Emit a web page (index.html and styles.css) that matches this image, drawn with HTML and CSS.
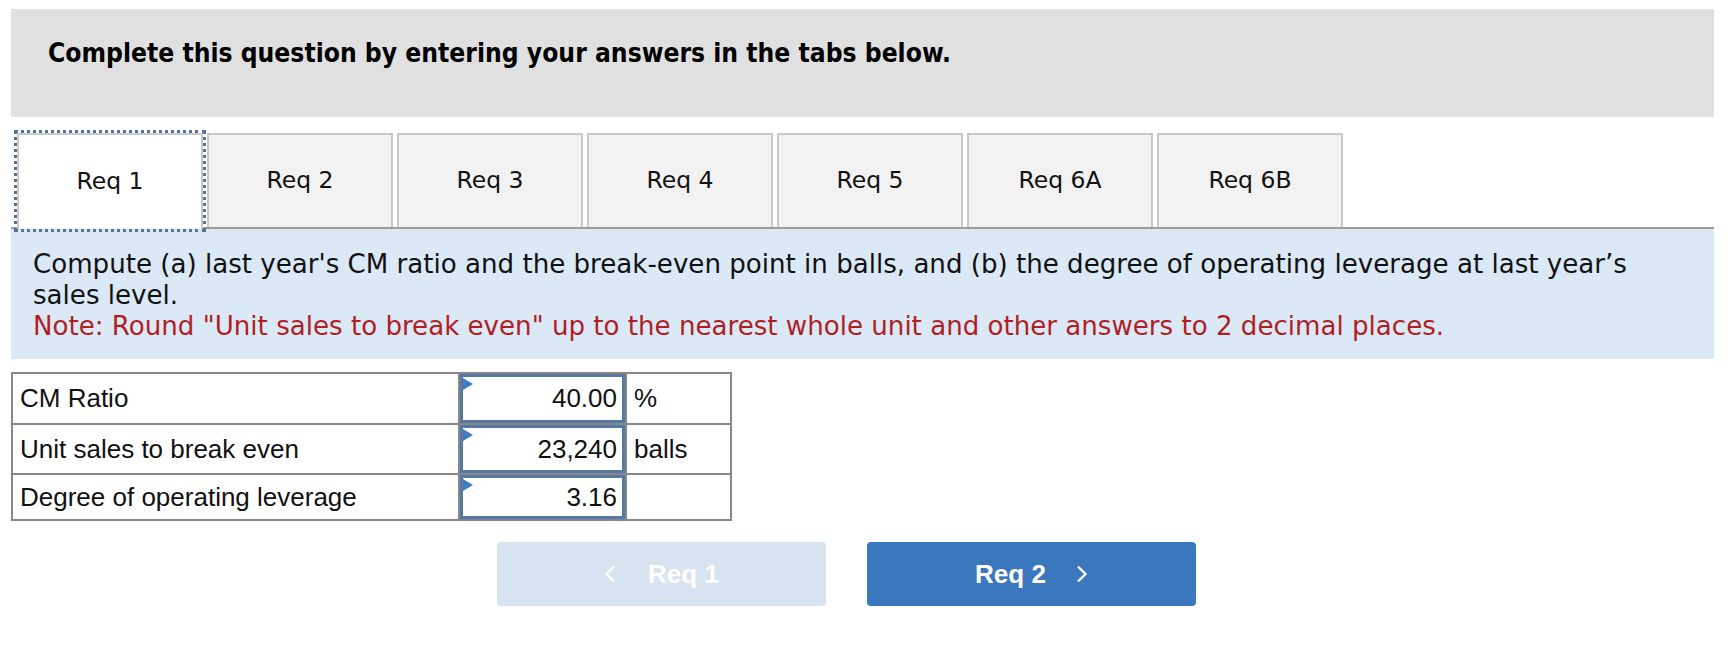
FILE: index.html
```html
<!DOCTYPE html>
<html lang="en">
<head>
<meta charset="utf-8">
<title>Req 1</title>
<link rel="stylesheet" href="styles.css">
</head>
<body>
<div class="page">
  <div class="header">
    <h1 class="title">Complete this question by entering your answers in the tabs below.</h1>
  </div>
  <div class="tabs">
    <div class="tab active">Req 1</div>
    <div class="tab">Req 2</div>
    <div class="tab">Req 3</div>
    <div class="tab">Req 4</div>
    <div class="tab">Req 5</div>
    <div class="tab">Req 6A</div>
    <div class="tab">Req 6B</div>
  </div>
  <div class="panel">
    <p class="prompt">Compute (a) last year's CM ratio and the break-even point in balls, and (b) the degree of operating leverage at last year’s sales level.</p>
    <p class="note">Note: Round "Unit sales to break even" up to the nearest whole unit and other answers to 2 decimal places.</p>
  </div>
  <table class="answers">
    <tr class="row1">
      <td class="label">CM Ratio</td>
      <td class="value"><div class="input">40.00</div></td>
      <td class="unit">%</td>
    </tr>
    <tr class="row2">
      <td class="label">Unit sales to break even</td>
      <td class="value"><div class="input">23,240</div></td>
      <td class="unit">balls</td>
    </tr>
    <tr class="row3">
      <td class="label">Degree of operating leverage</td>
      <td class="value"><div class="input">3.16</div></td>
      <td class="unit"></td>
    </tr>
  </table>
  <div class="nav">
    <button class="btn prev" type="button">
      <svg class="chev" width="12" height="18" viewBox="0 0 12 18"><polyline points="10,1.5 2.5,9 10,16.5" fill="none" stroke="currentColor" stroke-width="2.4"/></svg>
      <span>Req 1</span>
    </button>
    <button class="btn next" type="button">
      <span>Req 2</span>
      <svg class="chev" width="12" height="18" viewBox="0 0 12 18"><polyline points="2,1.5 9.5,9 2,16.5" fill="none" stroke="currentColor" stroke-width="2.4"/></svg>
    </button>
  </div>
</div>
</body>
</html>
```

FILE: styles.css
```css
* { box-sizing: border-box; }
html, body { margin: 0; padding: 0; background: #fff; }
body { font-family: "DejaVu Sans", sans-serif; color: #111; }

.page {
  padding: 9px 20px 0 11px;
}

.header {
  background: #e0e0e0;
  height: 108px;
  padding: 27px 0 0 37px;
}
.title {
  margin: 0;
  font-family: "DejaVu Sans Condensed", "DejaVu Sans", sans-serif;
  font-weight: bold;
  font-size: 26.2px;
  line-height: 34px;
  color: #000;
}

.tabs {
  display: flex;
  gap: 4px;
  margin-top: 16px;
  padding-left: 6px;
  align-items: flex-end;
}
.tab {
  width: 186px;
  height: 94px;
  border: 2px solid #c9c9c9;
  border-bottom: none;
  background: #f2f2f2;
  display: flex;
  align-items: center;
  justify-content: center;
  font-size: 23.5px;
  color: #111;
  padding-bottom: 2px;
}
.tab.active {
  background: #fff;
  height: 96px;
  margin-bottom: -2px;
  position: relative;
  z-index: 1;
  outline: 3px dotted #52739f;
  outline-offset: 0px;
}

.panel {
  background: #dbe8f6;
  border-top: 2px solid #9b9b9b;
  padding: 20px 50px 17px 22px;
  font-size: 26.1px;
  line-height: 31px;
}
.panel p { margin: 0; }
.note { color: #b01e24; }

.answers {
  margin-top: 13px;
  border-collapse: collapse;
  font-family: "Liberation Sans", Arial, sans-serif;
  font-size: 26px;
  color: #111;
}
.answers td {
  border: 2px solid #878787;
  padding: 0;
}
.row1 { height: 51px; }
.row2 { height: 50px; }
.row3 { height: 46px; }
.label {
  width: 447px;
  padding-left: 7px !important;
}
.value {
  width: 167px;
  height: inherit;
}
.input {
  position: relative;
  height: 100%;
  min-height: 46px;
  border: 3px solid #5778a4;
  background: #fff;
  text-align: right;
  padding-right: 5px;
  display: flex;
  align-items: center;
  justify-content: flex-end;
}
.row3 .input { min-height: 42px; }
.row1 .input { min-height: 47px; }
.input::before {
  content: "";
  position: absolute;
  left: 0;
  top: 1px;
  border-top: 6px solid transparent;
  border-bottom: 6px solid transparent;
  border-left: 10px solid #3f7cc2;
}
.unit {
  width: 105px;
  padding-left: 7px !important;
}

.nav {
  display: flex;
  gap: 41px;
  margin-top: 21px;
  padding-left: 486px;
}
.btn {
  width: 329px;
  height: 64px;
  border: none;
  border-radius: 4px;
  display: flex;
  align-items: center;
  justify-content: center;
  font-family: "Liberation Sans", Arial, sans-serif;
  font-weight: bold;
  font-size: 26px;
  color: #fff;
  padding: 0;
}
.btn.prev { background: #d8e3f1; gap: 32px; }
.btn.next { background: #3a77bd; gap: 30px; }
.chev { display: block; }
```
